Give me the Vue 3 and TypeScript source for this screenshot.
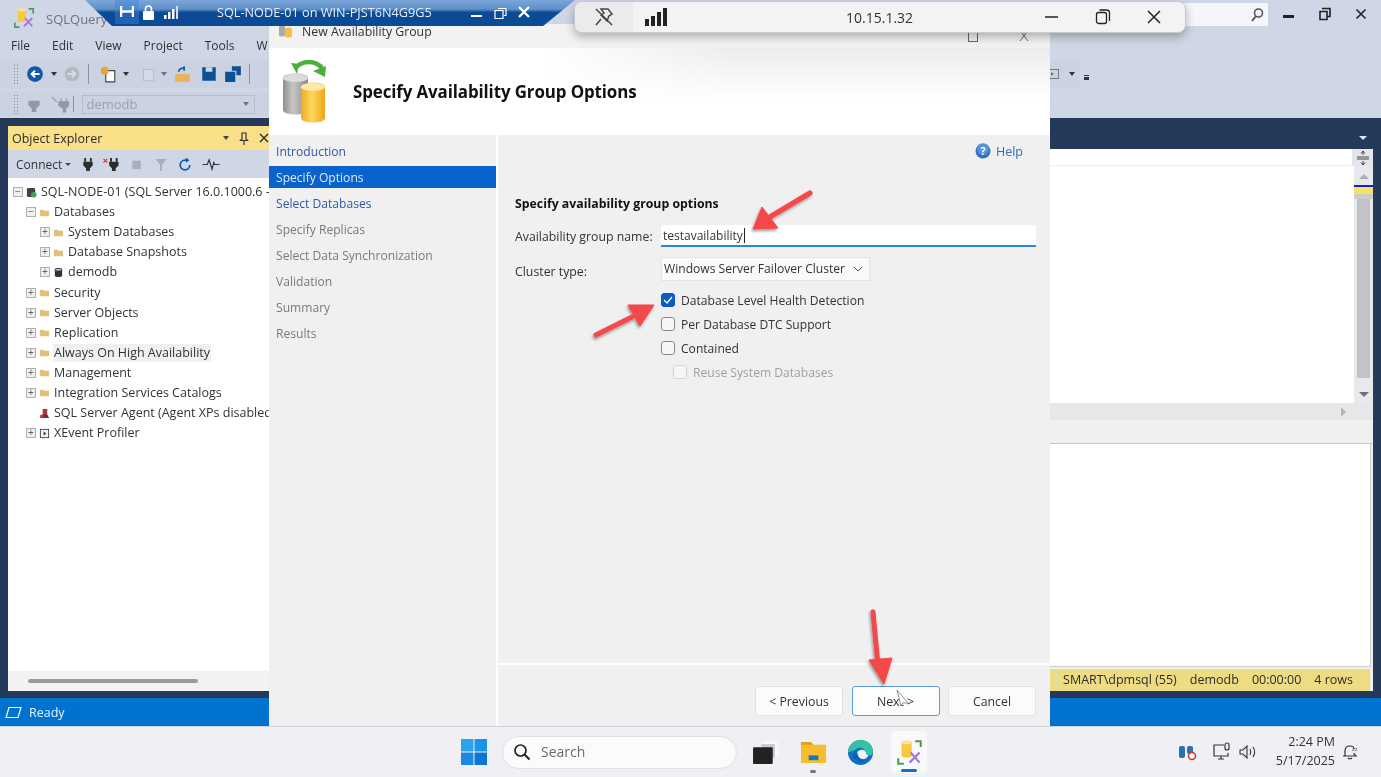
<script setup lang="ts">
interface TreeNode { label: string; level: number; exp: '' | '+' | '-'; icon: string; hl?: boolean }
const tree: TreeNode[] = [
  { label: 'SQL-NODE-01 (SQL Server 16.0.1000.6 -', level: 0, exp: '-', icon: 'server' },
  { label: 'Databases', level: 1, exp: '-', icon: 'folder' },
  { label: 'System Databases', level: 2, exp: '+', icon: 'folder' },
  { label: 'Database Snapshots', level: 2, exp: '+', icon: 'folder' },
  { label: 'demodb', level: 2, exp: '+', icon: 'db' },
  { label: 'Security', level: 1, exp: '+', icon: 'folder' },
  { label: 'Server Objects', level: 1, exp: '+', icon: 'folder' },
  { label: 'Replication', level: 1, exp: '+', icon: 'folder' },
  { label: 'Always On High Availability', level: 1, exp: '+', icon: 'folder', hl: true },
  { label: 'Management', level: 1, exp: '+', icon: 'folder' },
  { label: 'Integration Services Catalogs', level: 1, exp: '+', icon: 'folder' },
  { label: 'SQL Server Agent (Agent XPs disabled', level: 1, exp: '', icon: 'agent' },
  { label: 'XEvent Profiler', level: 1, exp: '+', icon: 'xe' },
]
const steps = [
  { label: 'Introduction', state: 'link' },
  { label: 'Specify Options', state: 'active' },
  { label: 'Select Databases', state: 'link' },
  { label: 'Specify Replicas', state: 'off' },
  { label: 'Select Data Synchronization', state: 'off' },
  { label: 'Validation', state: 'off' },
  { label: 'Summary', state: 'off' },
  { label: 'Results', state: 'off' },
]
const menu = ['File', 'Edit', 'View', 'Project', 'Tools', 'W']
const checks = [
  { label: 'Database Level Health Detection', checked: true, off: false },
  { label: 'Per Database DTC Support', checked: false, off: false },
  { label: 'Contained', checked: false, off: false },
  { label: 'Reuse System Databases', checked: false, off: true },
]
const statusCells = ['SMART\\dpmsql (55)', 'demodb', '00:00:00', '4 rows']
</script>

<template>
  <div class="screen">
    <svg width="0" height="0" class="defs">
      <defs>
        <linearGradient id="gy" x1="0" x2="1" y1="0" y2="0"><stop offset="0" stop-color="#8f8f8f" /><stop offset=".4" stop-color="#c6c6c6" /><stop offset="1" stop-color="#8a8a8a" /></linearGradient>
        <linearGradient id="yl" x1="0" x2="1" y1="0" y2="0"><stop offset="0" stop-color="#f2a91f" /><stop offset=".45" stop-color="#fbd75f" /><stop offset="1" stop-color="#efa61c" /></linearGradient>
      </defs>
      <symbol id="ssms" viewBox="0 0 24 24">
        <path d="M5 3c0-2 9-2 9 0v12c0 2-9 2-9 0z" fill="#f7c93e" />
        <ellipse cx="9.500" cy="3" rx="4.500" ry="1.700" fill="#fbe49a" />
        <path d="M17 2h5v5M2 17v5h5" fill="none" stroke="#4c9a5a" stroke-width="1.800" />
        <path d="M12 21l9-9M13 12l8 9" stroke="#a578d8" stroke-width="2" />
      </symbol>
      <symbol id="folder" viewBox="0 0 12 10">
        <path d="M1 2h4l1 1h5v6H1z" fill="#e3c078" />
      </symbol>
    </svg>

    <div class="ssms">
      <header class="titlebar">
        <svg class="app-icon"><use href="#ssms" /></svg>
        <span class="app-title">SQLQuery</span>
        <div class="title-spacer"></div>
        <div class="search-box">
          <svg width="16" height="16" viewBox="0 0 16 16"><circle cx="9.500" cy="6" r="4" fill="none" stroke="#555" stroke-width="1.600" /><path d="M7 9l-4 5" stroke="#555" stroke-width="2" /></svg>
        </div>
        <div class="win-btns">
          <svg class="w-min" width="12" height="12" viewBox="0 0 12 12"><rect x="0" y="7" width="11" height="3" fill="#222" /></svg>
          <svg class="w-max" width="14" height="14" viewBox="0 0 14 14"><path d="M4 1.500h8v8h-3M2 4.500h7v8H2z" fill="none" stroke="#222" stroke-width="1.600" /></svg>
          <svg class="w-max" width="12" height="12" viewBox="0 0 12 12"><path d="M1.500 1.500l9 9M10.500 1.500l-9 9" stroke="#222" stroke-width="1.600" /></svg>
        </div>
      </header>

      <nav class="menubar">
        <span v-for="m in menu" :key="m" class="menu-item">{{ m }}</span>
      </nav>

      <div class="toolstrip first">
        <span class="grip"></span>
        <svg class="ti ml8" viewBox="0 0 16 16"><circle cx="8" cy="8" r="7" fill="#0e5aa7" /><path d="M12 8H5M8 5L5 8l3 3" stroke="#fff" stroke-width="1.800" fill="none" /></svg>
        <span class="caret ml6"></span>
        <svg class="ti ml6" viewBox="0 0 16 16"><circle cx="8" cy="8" r="6.500" fill="#b3b8c2" /><path d="M4 8h7M8 5l3 3-3 3" stroke="#d7dce6" stroke-width="1.800" fill="none" /></svg>
        <span class="sep ml6"></span>
        <svg class="ti ml10" viewBox="0 0 16 16"><path d="M6 5h8v10H6z" fill="#fff" stroke="#444" /><circle cx="5" cy="5" r="3.500" fill="#e8a33d" /></svg>
        <span class="caret ml6"></span>
        <svg class="ti dim ml10" viewBox="0 0 16 16"><path d="M4 4h9v10H4z" fill="#dde1ea" stroke="#aab0bb" /></svg>
        <span class="caret dim ml4"></span>
        <svg class="ti ml6" viewBox="0 0 16 16"><path d="M1 8h13v7H1z" fill="#e8b45b" /><path d="M4 6a4 4 0 0 1 5-3M9 1v4" stroke="#0e5aa7" stroke-width="1.500" fill="none" /></svg>
        <svg class="ti ml8" viewBox="0 0 16 16"><path d="M2 2h12v12H2z" fill="#0e4f94" /><path d="M5 2h6v4H5z" fill="#cfd6e5" /></svg>
        <svg class="ti ml6" viewBox="0 0 16 16"><path d="M1 6h9v9H1zM7 1h8v8h-4V5H7z" fill="#0e4f94" /></svg>
        <span class="sep ml6"></span>
        <span class="strip-fill"></span>
        <span class="strip-end">
          <svg width="12" height="12" viewBox="0 0 12 12"><rect x="0.500" y="1.500" width="10" height="9" fill="none" stroke="#777" /><path d="M3 4l3 2-3 2z" fill="#777" /></svg>
          <span class="caret"></span><span class="ovf"></span>
        </span>
      </div>

      <div class="toolstrip second">
        <span class="grip"></span>
        <svg class="ti dim2 ml6" viewBox="0 0 16 16"><path d="M5 1v4M11 1v4M3 5h10v4l-3 3v3H6v-3L3 9z" fill="#8d939e" /></svg>
        <svg class="ti dim2 ml8" viewBox="0 0 16 16"><path d="M1 2l4 4M9 3v3M14 3v3M7 6h9v3l-3 3v3h-2v-3L7 9z" fill="#8d939e" stroke="#8d939e" /></svg>
        <span class="sep short ml4"></span>
        <div class="db-select ml8">demodb<span class="caret dim"></span></div>
      </div>

      <main class="workspace">
        <section class="explorer">
          <div class="oe-head">
            <span>Object Explorer</span>
            <span class="oe-btns">
              <span class="caret dark"></span>
              <svg width="10" height="13" viewBox="0 0 10 13"><path d="M3 1h4v6l1.500 1.500h-7L3 7zM5 8.500V13" fill="none" stroke="#333" stroke-width="1.200" /></svg>
              <svg width="10" height="10" viewBox="0 0 10 10"><path d="M1 1l8 8M9 1l-8 8" stroke="#333" stroke-width="1.500" /></svg>
            </span>
          </div>
          <div class="oe-tools">
            <span class="connect">Connect</span><span class="caret dark small"></span>
            <svg class="oi" viewBox="0 0 14 16"><path d="M4 1v4M10 1v4" stroke="#2c2c2c" stroke-width="2" /><path d="M2 5h10v4l-3 3v3H5v-3L2 9z" fill="#2c2c2c" /></svg>
            <svg class="oi wide" viewBox="0 0 18 16"><path d="M1 2l4 4M5 2L1 6" stroke="#d33" stroke-width="1.300" /><path d="M9 1v4M15 1v4" stroke="#2c2c2c" stroke-width="2" /><path d="M7 5h10v4l-3 3v3h-4v-3L7 9z" fill="#2c2c2c" /></svg>
            <svg class="oi" viewBox="0 0 14 16"><rect x="2" y="4" width="9" height="9" fill="#a9aeb8" /></svg>
            <svg class="oi" viewBox="0 0 14 16"><path d="M1 2h12L8 8v7H6V8z" fill="#a9aeb8" /></svg>
            <svg class="oi" viewBox="0 0 16 16"><path d="M13.500 8.500A5.500 5.500 0 1 1 8 3h3" fill="none" stroke="#0e5aa7" stroke-width="2" /><path d="M9 0l4 3-4 3z" fill="#0e5aa7" /></svg>
            <svg class="oi pulse" viewBox="0 0 18 16"><path d="M0 8h5l2-5 3 10 2-7 1 2h5" fill="none" stroke="#333" stroke-width="1.300" /></svg>
          </div>
          <div class="tree">
            <div v-for="n in tree" :key="n.label" class="tree-row" :class="'lv' + n.level">
              <span class="exp" :class="{ none: !n.exp }">
                <template v-if="n.exp">{{ n.exp === '+' ? '+' : '−' }}</template>
              </span>
              <svg v-if="n.icon === 'folder'" class="node"><use href="#folder" /></svg>
              <svg v-else-if="n.icon === 'server'" class="node" viewBox="0 0 12 12"><rect x="1" y="1" width="9" height="10" rx="1.500" fill="#444" /><circle cx="8.500" cy="8.500" r="3" fill="#3aa655" /></svg>
              <svg v-else-if="n.icon === 'db'" class="node" viewBox="0 0 12 12"><path d="M2 2.500c0-2 8-2 8 0v7c0 2-8 2-8 0z" fill="#333" /><ellipse cx="6" cy="3" rx="3.500" ry="1" fill="#bbb" /></svg>
              <svg v-else-if="n.icon === 'agent'" class="node" viewBox="0 0 12 12"><rect x="4" y="1" width="5" height="7" fill="#b33" /><path d="M1 11l3-4h5l2 4z" fill="#444" /><circle cx="3" cy="9" r="2" fill="#d33" /></svg>
              <svg v-else class="node" viewBox="0 0 12 12"><rect x="1.500" y="1.500" width="9" height="9" fill="#f3f3f3" stroke="#444" /><path d="M5 3.500v5l3-2.500z" fill="#444" /></svg>
              <span class="tree-label" :class="{ hl: n.hl }">{{ n.label }}</span>
            </div>
          </div>
          <div class="oe-scroll"><span class="oe-thumb"></span></div>
        </section>

        <section class="editor">
          <div class="editor-top">
            <span class="tab-caret"></span>
          </div>
          <div class="query-head">
            <span class="splitter">
              <svg width="12" height="14" viewBox="0 0 12 14"><path d="M0 6h12M0 8h12M6 0v4M6 10v4M4 2.500L6 0l2 2.500M4 11.500L6 14l2-2.500" fill="none" stroke="#444" /></svg>
            </span>
          </div>
          <div class="query-body">
            <div class="q-text"></div>
            <div class="vscroll">
              <span class="arr up"></span>
              <span class="marks"></span>
              <span class="thumb"></span>
              <span class="arr down"></span>
            </div>
          </div>
          <div class="hscroll"><span class="arr right"></span></div>
          <div class="split-gap"></div>
          <div class="results"></div>
          <div class="q-status">
            <span v-for="c in statusCells" :key="c" class="q-cell">{{ c }}</span>
          </div>
        </section>
      </main>

      <footer class="statusbar">
        <svg width="17" height="13" viewBox="0 0 17 13"><path d="M4 1.500h12l-3 10H1z" fill="none" stroke="#fff" stroke-width="1.200" /></svg>
        <span>Ready</span>
      </footer>
    </div>

    <div class="taskbar">
      <div class="task-center">
        <svg width="26" height="26" viewBox="0 0 26 26">
          <rect x="0" y="0" width="12.500" height="12.500" fill="#2aa4ee" /><rect x="13.500" y="0" width="12.500" height="12.500" fill="#1c93e6" />
          <rect x="0" y="13.500" width="12.500" height="12.500" fill="#1a8be0" /><rect x="13.500" y="13.500" width="12.500" height="12.500" fill="#0d76d2" />
        </svg>
        <div class="task-search">
          <svg width="18" height="18" viewBox="0 0 18 18"><circle cx="7.500" cy="7.500" r="5.500" fill="none" stroke="#222" stroke-width="1.700" /><path d="M11.500 11.500l5 5" stroke="#222" stroke-width="1.900" /></svg>
          <span>Search</span>
        </div>
        <svg class="tb-app" viewBox="0 0 26 26"><rect x="9" y="2" width="16" height="16" rx="2" fill="#f8f8f8" /><rect x="9" y="5" width="13" height="13" fill="#c8c8c8" /><rect x="1" y="8" width="19" height="16" rx="1" fill="#222" /></svg>
        <span class="tb-slot running">
          <svg class="tb-app" viewBox="0 0 28 26"><path d="M1 2h10l3 3h13v19H1z" fill="#f8bd2f" /><path d="M1 2h10l3 3H1z" fill="#e0a01f" /><path d="M9 16h10v5H9z" fill="#1478c8" /></svg>
        </span>
        <svg class="tb-app edge" viewBox="0 0 28 28">
          <circle cx="14" cy="14" r="13" fill="#0f6fc0" />
          <path d="M1 14C2 5 9 1 14 1c8 0 13 6 13 12 0 4-4 5-7 4-2-1-1-3-2-5-1-3-6-4-9-1-2 1-4 2-8 3z" fill="#35c1a5" />
          <path d="M11 14c0-3 6-4 8-1 1 2 0 3 3 4-2 5-9 6-12 1-1-1-1-3 1-4z" fill="#fff" opacity=".92" />
          <path d="M11 15c0 4 4 7 9 6-4 4-11 3-13-2-1-3 1-6 4-4z" fill="#0f5fb0" />
        </svg>
        <span class="tb-slot active">
          <svg class="tb-app"><use href="#ssms" /></svg>
        </span>
      </div>
      <div class="tray">
        <svg width="20" height="18" viewBox="0 0 20 18"><rect x="1" y="3" width="6" height="12" rx="2" fill="#2f6fb5" /><rect x="9" y="3" width="6" height="8" rx="2" fill="#2f6fb5" /><circle cx="14" cy="13" r="3.500" fill="#fff" stroke="#c33" stroke-width="1.500" /></svg>
        <svg class="tray-net" width="20" height="20" viewBox="0 0 20 20"><path d="M12 3H2v11h14v-3M6 17h6M9 14v3" fill="none" stroke="#333" stroke-width="1.200" /><rect x="13" y="1" width="4" height="7" rx="2" fill="none" stroke="#333" stroke-width="1.200" /></svg>
        <svg class="tray-vol" width="18" height="16" viewBox="0 0 18 16"><path d="M1 6h3l4-4v12l-4-4H1z" fill="none" stroke="#333" stroke-width="1.100" /><path d="M11 5c1 2 1 4 0 6M14 3c2 3 2 7 0 10" fill="none" stroke="#333" stroke-width="1.100" /></svg>
        <div class="clock"><span>2:24 PM</span><span>5/17/2025</span></div>
        <svg width="18" height="18" viewBox="0 0 18 18"><path d="M4 13V8c0-3 2-5 5-5s4 1 4 3M2 13h13l-2-2v-1M7 15c1 1 3 1 4 0" fill="none" stroke="#333" stroke-width="1.200" /><text x="11" y="8" font-size="6" font-family="Open Sans" fill="#333">zz</text></svg>
      </div>
    </div>

    <section class="dialog">
      <div class="dlg-title">
        <svg width="15" height="14" viewBox="0 0 15 14"><path d="M1 3c0-2 6-2 6 0v8c0 2-6 2-6 0z" fill="#aaa" /><path d="M7 5c0-2 7-2 7 0v7c0 2-7 2-7 0z" fill="#f4c040" /></svg>
        <span>New Availability Group</span>
        <span class="dlg-win">
          <svg width="10" height="14" viewBox="0 0 10 14"><rect x="0.500" y="0.500" width="9" height="12" fill="none" stroke="#666" /></svg>
          <svg width="10" height="14" viewBox="0 0 10 14"><path d="M0 0l9 12M10 0L1 12" stroke="#666" /></svg>
        </span>
      </div>
      <div class="dlg-banner">
        <svg class="banner-icon" viewBox="0 0 50 68">
          <path d="M12 10c8-8 20-8 27 0" fill="none" stroke="#4cae3c" stroke-width="4.500" />
          <path d="M8 5l8 1-2 10zM42 19l-12-6 13-5z" fill="#4cae3c" />
          <path d="M0 20c0-6 25-6 25 0v32c0 6-25 6-25 0z" fill="url(#gy)" />
          <ellipse cx="12.500" cy="20" rx="12.500" ry="4" fill="#dcdcdc" />
          <path d="M18 29c0-6 24-6 24 0v31c0 6-24 6-24 0z" fill="url(#yl)" />
          <ellipse cx="30" cy="29" rx="12" ry="4" fill="#fdeaa4" />
        </svg>
        <h1>Specify Availability Group Options</h1>
      </div>
      <div class="dlg-body">
        <aside class="dlg-nav">
          <div v-for="s in steps" :key="s.label" class="step" :class="s.state">{{ s.label }}</div>
        </aside>
        <div class="dlg-main">
          <div class="dlg-content">
            <div class="help">
              <svg width="16" height="16" viewBox="0 0 16 16"><circle cx="8" cy="8" r="7.500" fill="#2f72c4" /><circle cx="8" cy="6" r="6" fill="#6ea6e3" opacity=".6" /><text x="8" y="12" text-anchor="middle" font-size="11" font-weight="700" font-family="Open Sans" fill="#fff">?</text></svg>
              <span>Help</span>
            </div>
            <h2>Specify availability group options</h2>
            <div class="form-row name-row">
              <label>Availability group name:</label>
              <div class="name-input"><span>testavailability</span><i class="cursor"></i></div>
            </div>
            <div class="form-row type-row">
              <label>Cluster type:</label>
              <div class="combo">Windows Server Failover Cluster
                <svg width="10" height="6" viewBox="0 0 10 6"><path d="M1 1l4 4 4-4" fill="none" stroke="#555" /></svg>
              </div>
            </div>
            <div class="checks">
              <div v-for="c in checks" :key="c.label" class="check" :class="{ off: c.off }">
                <span class="box" :class="{ on: c.checked }">
                  <svg v-if="c.checked" width="10" height="8" viewBox="0 0 10 8"><path d="M1 4l3 3 5-6" fill="none" stroke="#fff" stroke-width="1.300" /></svg>
                </span>
                <span>{{ c.label }}</span>
              </div>
            </div>
          </div>
          <div class="dlg-footer">
            <button type="button">&lt; Previous</button>
            <button type="button" class="primary">Next &gt;</button>
            <button type="button">Cancel</button>
          </div>
        </div>
      </div>
    </section>

    <div class="rdp">
      <span class="rdp-pin">
        <svg width="14" height="12" viewBox="0 0 14 12"><path d="M1 0v11M13 0v11M1 5.500h12" stroke="#fff" stroke-width="2.500" /></svg>
      </span>
      <svg class="rdp-lock" width="13" height="15" viewBox="0 0 13 15"><rect x="1" y="6" width="11" height="9" rx="1" fill="#fff" /><path d="M3.500 6V4a3 3 0 0 1 6 0v2" fill="none" stroke="#fff" stroke-width="1.600" /></svg>
      <svg class="rdp-bars" width="14" height="13" viewBox="0 0 14 13"><rect x="0" y="9" width="2.500" height="4" fill="#fff" /><rect x="4" y="6" width="2.500" height="7" fill="#fff" /><rect x="8" y="3" width="2.500" height="10" fill="#fff" /><rect x="12" y="0" width="2" height="13" fill="#cfe0f2" /></svg>
      <span class="rdp-name">SQL-NODE-01 on WIN-PJST6N4G9G5</span>
      <span class="rdp-btns">
        <svg width="12" height="12" viewBox="0 0 12 12"><rect x="0" y="9" width="11" height="2" fill="#fff" /></svg>
        <svg width="13" height="13" viewBox="0 0 13 13"><path d="M4 2.500h8v7h-2M1 4.500h8v8H1z" fill="none" stroke="#fff" stroke-width="1.200" /></svg>
        <svg width="12" height="12" viewBox="0 0 12 12"><path d="M1 1l10 10M11 1L1 11" stroke="#fff" stroke-width="2.400" /></svg>
      </span>
    </div>

    <div class="remote">
      <span class="pin">
        <svg width="20" height="20" viewBox="0 0 20 20"><path d="M7 2h7l4 5-3 2-2 5-6-6 3-2zM7 12l-5 6M2 2l16 16" fill="none" stroke="#444" stroke-width="1.500" /></svg>
      </span>
      <svg class="bars" width="24" height="18" viewBox="0 0 24 18"><rect x="0" y="11" width="4" height="7" fill="#222" /><rect x="6" y="8" width="4" height="10" fill="#222" /><rect x="12" y="4" width="4" height="14" fill="#222" /><rect x="18" y="0" width="4" height="18" fill="#222" /></svg>
      <span class="remote-ip">10.15.1.32</span>
      <span class="remote-btns">
        <svg width="14" height="14" viewBox="0 0 14 14"><path d="M0 7h13" stroke="#222" stroke-width="1.300" /></svg>
        <svg width="16" height="16" viewBox="0 0 16 16"><rect x="1.500" y="3.500" width="10" height="11" rx="2" fill="none" stroke="#222" stroke-width="1.300" /><path d="M4.500 1h7a3 3 0 0 1 3 3v8" fill="none" stroke="#222" stroke-width="1.300" /></svg>
        <svg width="14" height="14" viewBox="0 0 14 14"><path d="M1 1l12 12M13 1L1 13" stroke="#222" stroke-width="1.500" /></svg>
      </span>
    </div>

    <svg class="arrows" viewBox="0 0 1381 777">
      <defs>
        <filter id="ash" x="-30%" y="-30%" width="160%" height="160%"><feDropShadow dx="-1" dy="2" stdDeviation="1.600" flood-color="#000" flood-opacity=".4" /></filter>
      </defs>
      <g fill="#f4484a" stroke="#f4484a" stroke-linejoin="round" filter="url(#ash)">
        <path d="M810 193L768 218" stroke-width="5" stroke-linecap="round" />
        <path d="M753 229L762 207L778 228z" stroke-width="1" />
        <path d="M596 335L632 317" stroke-width="5" stroke-linecap="round" />
        <path d="M654 305L628 305L640 326z" stroke-width="1" />
        <path d="M873 612L878 665" stroke-width="5" stroke-linecap="round" />
        <path d="M884 684L869 660L892 658z" stroke-width="1" />
      </g>
      <path d="M897 690l11 13-5 0-2 3z" fill="#fff" stroke="#777" stroke-width=".8" />
    </svg>
  </div>
</template>

<style>
html, body { margin: 0; padding: 0; overflow: hidden; }
</style>

<style scoped>
.screen {
  position: relative;
  width: 1381px;
  height: 777px;
  overflow: hidden;
  font-family: "Open Sans", "Noto Sans", sans-serif;
  font-size: 12.500px;
  color: #2b2b2b;
  display: flex;
  flex-direction: column;
  background: #eef0f3;
  filter: blur(.3px);
}
.defs { position: absolute; }
.ssms { height: 726px; display: flex; flex-direction: column; background: #cfd6e5; }

.ml4 { margin-left: 4px; }
.ml6 { margin-left: 6.500px; }
.ml8 { margin-left: 8px; }
.ml10 { margin-left: 10px; }

.titlebar { height: 36px; display: flex; align-items: flex-start; padding: 7px 0 0 13px; box-sizing: border-box; }
.app-icon { width: 22px; height: 22px; }
.app-title { margin: 3px 0 0 11px; font-size: 13px; color: #6f737d; }
.title-spacer { flex: 1; }
.search-box { width: 90px; height: 23px; margin: -4px 0 0 0; background: #f5f6f9; display: flex; justify-content: flex-end; align-items: center; padding-right: 3px; box-sizing: border-box; }
.win-btns { width: 113px; display: flex; align-items: center; padding-left: 15px; box-sizing: border-box; margin-top: -4px; height: 22px; }
.w-max { margin-left: 23px; }

.menubar { height: 24px; display: flex; align-items: center; padding: 0 0 6px 11px; box-sizing: border-box; gap: 22px; font-size: 12px; color: #2f3033; }

.toolstrip { display: flex; align-items: center; padding-left: 13px; box-sizing: border-box; }
.first { height: 28px; background: linear-gradient(to right, #cbd2e2 1080px, transparent 1080px); width: 1092px; }
.second { height: 24px; margin-top: 4px; margin-bottom: 2px; background: #cbd2e2; width: 269px; }
.grip { width: 5px; height: 20px; flex: none; background-image: radial-gradient(#7a8190 35%, transparent 40%); background-size: 3px 3px; }
.ti { width: 18px; height: 18px; flex: none; }
.dim { opacity: .6; }
.dim2 { opacity: .9; }
.caret { display: inline-block; width: 0; height: 0; flex: none; border-left: 3.500px solid transparent; border-right: 3.500px solid transparent; border-top: 4px solid #333; }
.caret.dark { border-top-color: #444; }
.caret.small { border-left-width: 3px; border-right-width: 3px; border-top-width: 3px; margin-left: 3px; }
.sep { width: 1px; height: 20px; flex: none; background: #8a91a0; }
.sep.short { height: 16px; }
.strip-fill { flex: 1; }
.strip-end { display: flex; align-items: center; gap: 9px; padding-right: 3px; }
.ovf { width: 5px; height: 5px; border-top: 1px solid #333; border-bottom: 3px solid #333; box-sizing: border-box; margin-top: 7px; }
.db-select { width: 173px; height: 19px; border: 1px solid #b5bccb; box-sizing: border-box; color: #9aa0ab; display: flex; align-items: center; justify-content: space-between; padding: 0 5px 0 4px; font-size: 13px; }

.workspace { flex: 1; min-height: 0; background: #253a5a; display: flex; padding: 8px 8px 7px 8px; box-sizing: border-box; }

.explorer { width: 261px; flex: none; display: flex; flex-direction: column; background: #fff; overflow: hidden; }
.oe-head { height: 24px; flex: none; background: #fbe08a; display: flex; align-items: center; justify-content: space-between; padding-left: 4px; font-size: 12.500px; }
.oe-btns { display: flex; align-items: center; justify-content: space-between; width: 46.500px; }
.oe-tools { height: 28px; flex: none; background: #cfd6e5; display: flex; align-items: center; padding-left: 8px; color: #333; }
.connect { font-size: 12px; }
.oi { width: 14px; height: 15px; flex: none; margin-left: 10px; }
.oi.wide { width: 18px; margin-left: 7px; }
.oi.pulse { width: 18px; }
.tree { flex: 1; min-height: 0; padding: 4px 0 0 5px; overflow: hidden; }
.tree-row { height: 20.100px; display: flex; align-items: center; white-space: nowrap; font-size: 12.500px; color: #333; }
.lv1 { padding-left: 13px; }
.lv2 { padding-left: 27px; }
.exp { width: 8px; height: 8px; flex: none; border: 1px solid #b0b0b0; display: flex; align-items: center; justify-content: center; font-size: 10px; line-height: 1; color: #666; background: #f0f0f0; margin-right: 3px; font-family: "Liberation Sans", sans-serif; }
.exp.none { visibility: hidden; }
.node { width: 11px; height: 11px; flex: none; margin-right: 3px; }
.tree-label { padding: 0 1px; line-height: 18px; }
.tree-label.hl { background: #f0f0f0; }
.oe-scroll { height: 20px; flex: none; background: #f2f2f4; display: flex; align-items: center; padding-left: 20px; }
.oe-thumb { width: 170px; height: 4px; border-radius: 2px; background: #9a9a9a; }

.editor { flex: 1; min-width: 0; display: flex; flex-direction: column; background: #f0f0f0; }
.editor-top { height: 23px; flex: none; background: #253a5a; display: flex; justify-content: flex-end; align-items: center; padding-right: 6px; }
.tab-caret { width: 0; height: 0; border-left: 4px solid transparent; border-right: 4px solid transparent; border-top: 4px solid #dfe6f0; }
.query-head { height: 16px; flex: none; background: #fff; display: flex; justify-content: flex-end; border-bottom: 1px solid #eee; }
.splitter { width: 21px; height: 18px; background: #e3e6ec; display: flex; justify-content: center; align-items: center; }
.query-body { height: 237px; flex: none; background: #fff; display: flex; justify-content: flex-end; }
.q-text { flex: 1; }
.vscroll { width: 19px; background: #e8e9ec; display: flex; flex-direction: column; align-items: center; position: relative; }
.marks { width: 100%; height: 12px; margin-top: 6px; border-top: 2px solid #1a1ad0; background: linear-gradient(#f5e463 0 60%, #ccc 60%); }
.thumb { width: 13px; flex: 1; background: #c2c3c9; margin-bottom: 25px; }
.arr { width: 0; height: 0; display: block; }
.arr.up { margin-top: 8px; border-left: 5px solid transparent; border-right: 5px solid transparent; border-bottom: 5px solid #a9adb8; }
.arr.down { position: absolute; bottom: 6px; border-left: 5px solid transparent; border-right: 5px solid transparent; border-top: 5px solid #6d7180; }
.hscroll { height: 17px; flex: none; background: #e6e7e9; display: flex; justify-content: flex-end; align-items: center; padding-right: 27px; }
.arr.right { border-top: 5px solid transparent; border-bottom: 5px solid transparent; border-left: 5px solid #b4b6bc; }
.split-gap { height: 24px; flex: none; background: #f0f0f0; border-bottom: 1px solid #c8c8c8; box-sizing: border-box; }
.results { flex: 1; min-height: 0; background: #fff; border-right: 1px solid #ccc; margin-right: 2px; border-bottom: 1px solid #ccc; }
.q-status { height: 22px; flex: none; background: #eedc82; display: flex; align-items: center; justify-content: flex-end; padding-right: 11px; margin-top: 2px; margin-right: 3px; font-size: 12.500px; color: #2c2c2c; }
.q-cell { padding: 0 6px 0 6px; border-left: 1px solid #dcdcb0; line-height: 18px; white-space: nowrap; }

.statusbar { height: 28px; flex: none; background: #0072cf; color: #e8f2fb; display: flex; align-items: center; gap: 7px; padding-left: 5px; font-size: 12.500px; }

.taskbar { height: 51px; flex: none; background: #eef0f3; border-top: 1px solid #d0d2d5; box-sizing: border-box; position: relative; display: flex; align-items: center; justify-content: flex-end; }
.task-center { position: absolute; left: 461px; top: 0; height: 50px; display: flex; align-items: center; }
.task-search { width: 235px; height: 33px; margin-left: 15px; margin-right: 15px; background: #fbfbfc; border: 1px solid #dfe0e3; border-radius: 17px; box-sizing: border-box; display: flex; align-items: center; gap: 10px; padding: 0 0 1px 10px; color: #6a6a6a; font-size: 14px; }
.tb-app { width: 27px; height: 27px; flex: none; }
.tb-slot { position: relative; width: 38px; height: 42px; display: flex; align-items: center; justify-content: center; margin-left: 15px; }
.tb-slot.running::after { content: ""; position: absolute; bottom: 0; left: 16px; width: 6px; height: 3px; border-radius: 2px; background: #777; }
.tb-slot.active { background: #f9f9fa; border-radius: 4px; margin-left: 17px; width: 36px; }
.tb-slot.active::after { content: ""; position: absolute; bottom: 1px; left: 10px; width: 16px; height: 3px; border-radius: 2px; background: #0a72d6; }
.edge { margin-left: 15px; }
.tray { display: flex; align-items: center; gap: 6px; padding-right: 22px; }
.tray-net { margin-left: 8px; }
.tray-vol { margin-left: 1px; }
.clock { display: flex; flex-direction: column; align-items: flex-end; font-size: 12.500px; line-height: 19px; color: #333; margin: -2px 0 0 13px; }

.dialog { position: absolute; left: 269px; top: 24px; width: 781px; height: 702px; background: #f0f0f0; display: flex; flex-direction: column; }
.dlg-title { height: 24px; flex: none; background: #f2f2f2; display: flex; align-items: center; gap: 9px; padding: 0 0 10px 9px; box-sizing: border-box; font-size: 12.300px; color: #333; }
.dlg-win { margin-left: auto; margin-top: 10px; display: flex; gap: 41px; padding-right: 21px; }
.dlg-banner { height: 87px; flex: none; background: linear-gradient(to right, #fff 35%, rgba(255, 255, 255, 0) 60%), linear-gradient(#ececec, #fff 60%); display: flex; align-items: center; padding-left: 14px; gap: 20px; }
.banner-icon { width: 50px; height: 68px; }
.dlg-banner h1 { margin: 0; font-size: 16.900px; font-weight: 700; color: #111; letter-spacing: -.1px; }
.dlg-body { flex: 1; min-height: 0; display: flex; }
.dlg-nav { width: 229px; flex: none; padding-top: 5px; box-sizing: border-box; border-right: 2px solid #fff; }
.step { height: 22px; margin-bottom: 4px; padding-left: 7px; line-height: 23px; font-size: 12.100px; white-space: nowrap; }
.step.link { color: #2d5aa8; }
.step.off { color: #7a7a7a; }
.step.active { background: #0a62cc; color: #dfeafa; }
.dlg-main { flex: 1; min-width: 0; display: flex; flex-direction: column; }
.dlg-content { flex: 1; min-height: 0; padding: 6px 14px 0 17px; }
.help { display: flex; justify-content: flex-end; align-items: center; gap: 5px; color: #2d6cc0; font-size: 12.500px; padding-right: 13px; height: 20px; }
.dlg-content h2 { margin: 34px 0 0 0; font-size: 12.300px; font-weight: 700; color: #111; line-height: 18px; }
.form-row { display: flex; align-items: center; }
.form-row label { width: 146px; flex: none; font-size: 12.300px; color: #333; }
.name-row { margin-top: 12px; height: 22px; }
.name-input { flex: 1; height: 22px; background: #fff; border-bottom: 2px solid #2a86da; box-sizing: border-box; display: flex; align-items: center; padding-left: 2px; font-size: 12px; color: #333; }
.cursor { display: inline-block; width: 1px; height: 15px; background: #222; margin-left: 1px; }
.type-row { margin-top: 10px; height: 26px; }
.type-row label { padding-top: 2px; }
.combo { width: 209px; height: 24px; margin-bottom: 3px; background: #fafafa; border: 1px solid #e4e4e4; box-sizing: border-box; display: flex; align-items: center; justify-content: space-between; padding: 0 6px 0 2px; font-size: 12.100px; color: #333; white-space: nowrap; }
.checks { margin: 5px 0 0 146px; display: flex; flex-direction: column; }
.check { height: 24px; display: flex; align-items: center; gap: 6px; font-size: 12.100px; color: #333; }
.check.off { color: #a0a0a0; margin-left: 12px; }
.box { width: 14px; height: 14px; border: 1px solid #8a8a8a; border-radius: 3px; box-sizing: border-box; display: flex; align-items: center; justify-content: center; background: #f6f6f6; }
.box.on { background: #0a5cc4; border-color: #0a5cc4; }
.check.off .box { border-color: #d2d2d2; }
.dlg-footer { height: 63px; flex: none; border-top: 2px solid #fff; box-sizing: border-box; display: flex; justify-content: flex-end; gap: 8.500px; padding: 21px 14px 0 0; }
.dlg-footer button { width: 88px; height: 30px; background: #fbfbfb; border: 1px solid #e2e2e2; border-radius: 3px; font-family: inherit; font-size: 12.300px; color: #333; padding: 0; }
.dlg-footer button.primary { border: 1.500px solid #5a9bd8; background: #fdfdfd; }

.rdp { position: absolute; left: 85px; top: 0; width: 490px; height: 26px; background: linear-gradient(#7ba7d9 0, #5f90c9 35%, #0d4a94 48%, #0b4a96 100%); clip-path: polygon(0 0, 100% 0, 93.500% 100%, 5.500% 100%); display: flex; align-items: center; padding: 0 0 2px 30px; box-sizing: border-box; }
.rdp-pin { width: 24px; height: 24px; background: rgba(60, 130, 210, .45); display: flex; align-items: center; justify-content: center; flex: none; }
.rdp-lock { margin-left: 2.500px; flex: none; }
.rdp-bars { margin-left: 9.500px; flex: none; }
.rdp-name { margin-left: 39px; color: #e6eef8; font-size: 12.700px; white-space: nowrap; }
.rdp-btns { display: flex; align-items: center; gap: 11px; margin-left: 39px; }

.remote { position: absolute; left: 574px; top: 1px; width: 612px; height: 32px; background: #f3f3f3; border: 1px solid #c9c9c9; border-radius: 8px; box-sizing: border-box; display: flex; align-items: center; box-shadow: 0 4px 10px rgba(0, 0, 0, .28); overflow: hidden; }
.pin { width: 58px; height: 100%; background: #ebebeb; display: flex; align-items: center; justify-content: center; flex: none; }
.bars { margin-left: 12px; flex: none; }
.remote-ip { margin-left: 177px; font-size: 14px; color: #333; width: 70px; white-space: nowrap; }
.remote-btns { margin-left: 129px; display: flex; align-items: center; gap: 36px; }

.arrows { position: absolute; left: 0; top: 0; width: 1381px; height: 777px; pointer-events: none; }
</style>
